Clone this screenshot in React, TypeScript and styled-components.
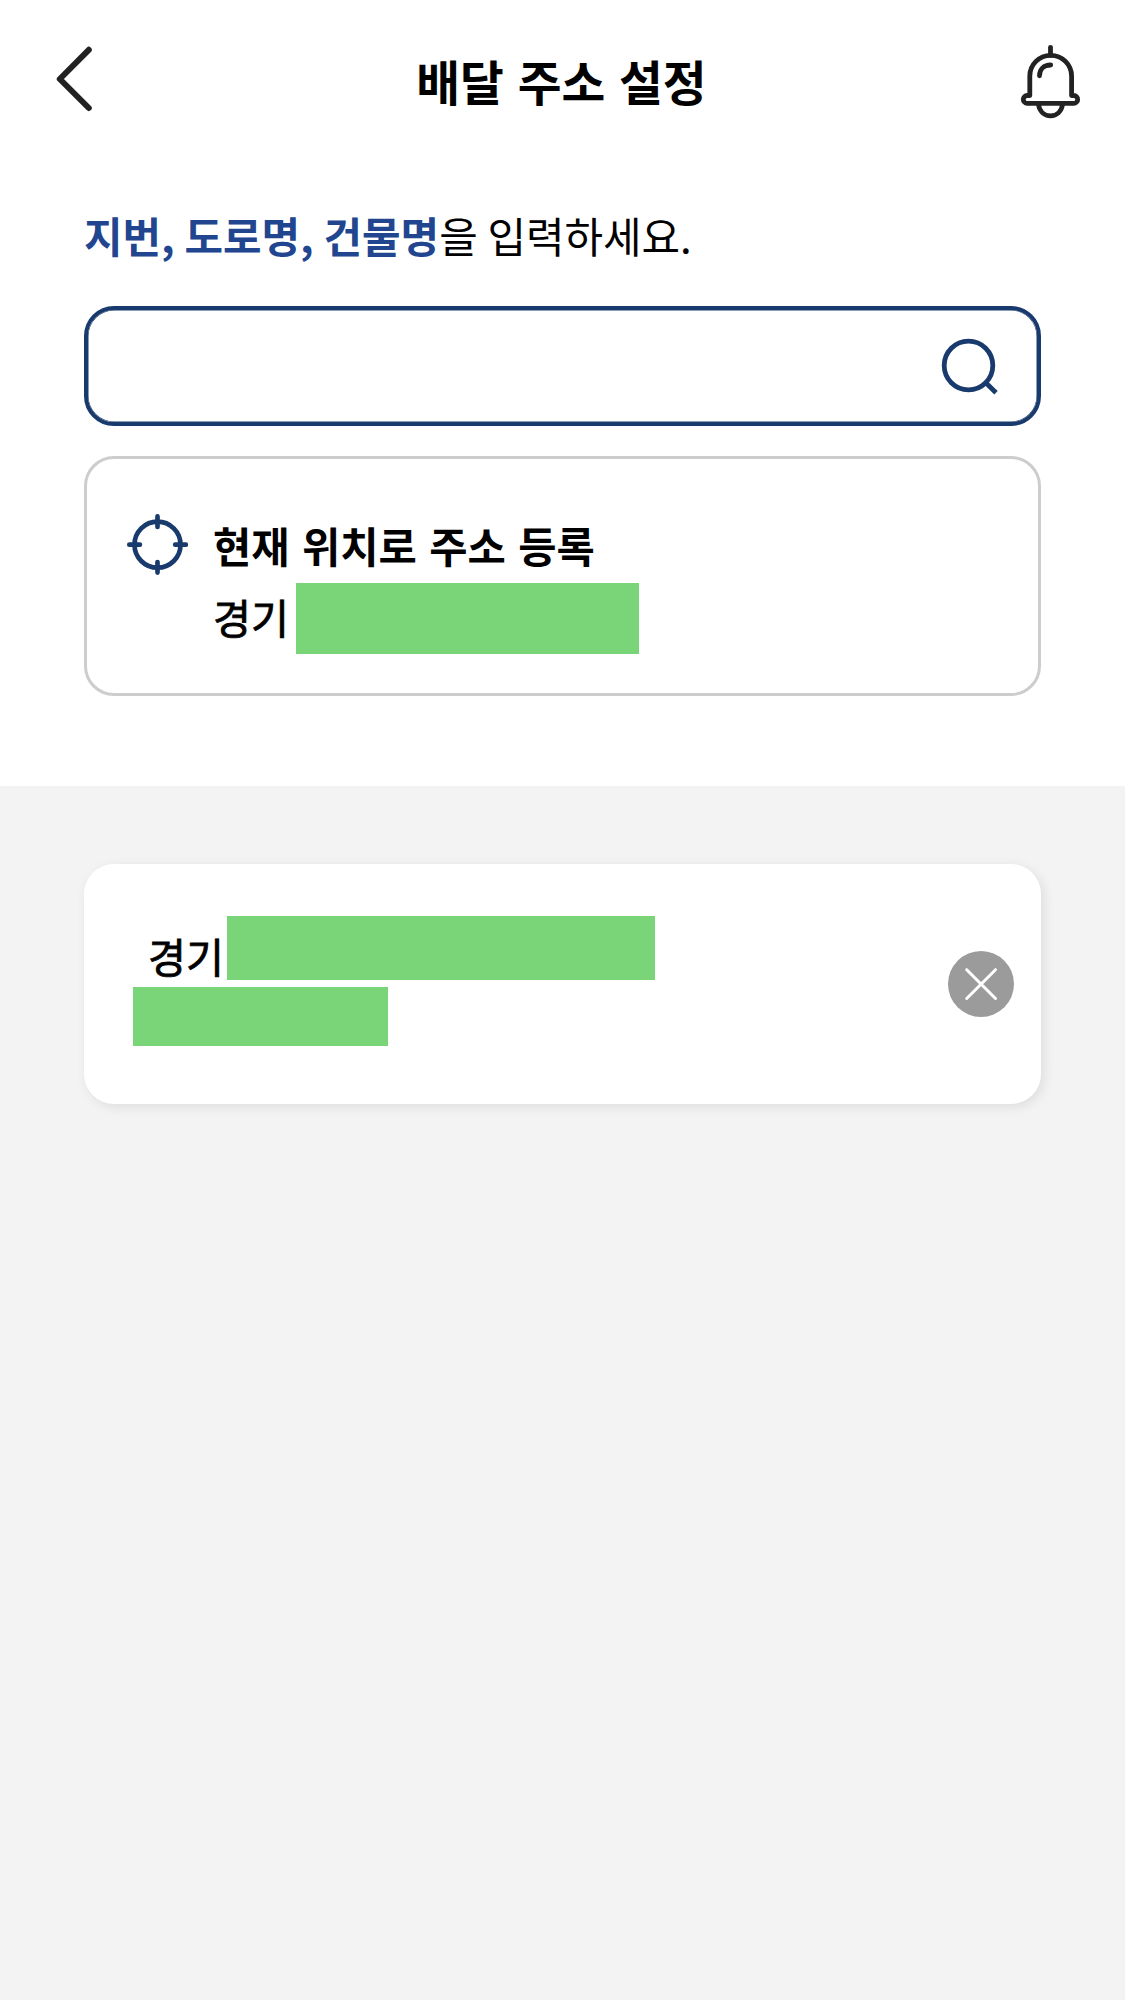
import React from "react";
import styled, { createGlobalStyle } from "styled-components";

const GlobalStyle = createGlobalStyle`
  * { box-sizing: border-box; }
  body {
    margin: 0;
    background: #f3f3f3;
    color: #000;
    font-family: "Noto Sans CJK KR", "Noto Sans", sans-serif;
  }
`;

const Screen = styled.div`
  width: 1125px;
  min-height: 2000px;
  display: flex;
  flex-direction: column;
  background: #f3f3f3;
`;

const TopPanel = styled.div`
  height: 786px;
  background: #fff;
`;

const Header = styled.header`
  display: grid;
  grid-template-columns: 120px 1fr 120px;
  align-items: start;
  height: 200px;
`;

const HeaderButton = styled.button`
  display: block;
  width: 120px;
  height: 100px;
  margin-top: 30px;
  padding: 0;
  border: 0;
  background: none;
`;

const Title = styled.h1`
  margin: 45px 2px 0 0;
  font-size: 47.6px;
  line-height: 72px;
  font-weight: 700;
  text-align: center;
  word-spacing: 3px;
  white-space: nowrap;
`;

const Form = styled.section`
  padding: 0 84px;
`;

const Guide = styled.p`
  height: 106px;
  margin: 0;
  padding-top: 4px;
  font-size: 41.9px;
  line-height: 62px;
  word-spacing: 0.3px;
  white-space: nowrap;
`;

const Keyword = styled.strong`
  color: #21468f;
  font-weight: 700;
`;

const SearchBox = styled.div`
  display: flex;
  align-items: center;
  height: 120px;
  padding-right: 37px;
  border: 4px solid #193a6d;
  border-radius: 30px;
  box-shadow: inset 0 0 0 0.5px #193a6d;
`;

const SearchInput = styled.input`
  flex: 1;
  min-width: 0;
  height: 100%;
  padding: 0 36px;
  border: 0;
  outline: 0;
  background: none;
  font: inherit;
  font-size: 42px;
`;

const LocationCard = styled.div`
  display: flex;
  align-items: flex-start;
  gap: 25px;
  height: 240px;
  margin-top: 30px;
  padding: 55px 39px 0;
  border: 3px solid #cdcdcd;
  border-radius: 30px;
`;

const LocationText = styled.div`
  display: flex;
  flex-direction: column;
  gap: 7px;
`;

const LocationTitle = styled.h2`
  margin: 0;
  font-size: 41.6px;
  line-height: 62px;
  font-weight: 700;
  word-spacing: 3px;
  white-space: nowrap;
`;

const AddressLine = styled.div<{ $gap: number }>`
  display: flex;
  align-items: flex-start;
  gap: ${(p) => p.$gap}px;
`;

const Region = styled.span<{ $top: number; $indent?: number }>`
  width: 77px;
  margin-left: ${(p) => p.$indent ?? 0}px;
  padding-top: ${(p) => p.$top}px;
  font-size: 41.3px;
  line-height: 50px;
  font-weight: 400;
  -webkit-text-stroke: 0.8px #000;
  white-space: nowrap;
`;

const Mask = styled.div<{ $width: number; $height: number }>`
  width: ${(p) => p.$width}px;
  height: ${(p) => p.$height}px;
  background: #7ad578;
`;

const SavedList = styled.section`
  padding: 78px 84px;
`;

const SavedCard = styled.div`
  display: flex;
  justify-content: space-between;
  height: 240px;
  padding: 52px 27px 0 49px;
  border-radius: 30px;
  background: #fff;
  box-shadow: 3px 3px 12px rgba(0, 0, 0, 0.09);
`;

const SavedAddress = styled.div`
  display: flex;
  flex-direction: column;
  gap: 7px;
`;

const DeleteButton = styled.button`
  width: 66px;
  height: 66px;
  margin-top: 35px;
  padding: 0;
  border: 0;
  border-radius: 50%;
  background: #9b9b9b;
`;

const Icon = styled.svg`
  display: block;
  flex: none;
  fill: none;
`;

export default function App() {
  return (
    <>
      <GlobalStyle />
      <Screen>
        <TopPanel>
          <Header>
            <HeaderButton aria-label="뒤로">
              <Icon width="120" height="100" viewBox="0 0 120 100" stroke="#222" strokeWidth="6" strokeLinecap="round" strokeLinejoin="round">
                <path d="M88.8 19.8 L59.8 49 L88.8 78" />
              </Icon>
            </HeaderButton>
            <Title>배달 주소 설정</Title>
            <HeaderButton aria-label="알림">
              <Icon width="120" height="100" viewBox="5 0 120 100" stroke="#222" strokeWidth="4.8" strokeLinecap="round" strokeLinejoin="round">
                <path d="M50.500 17.300v8" />
                <path d="M29.800 65.500V46.200a20.900 20.900 0 0 1 41.800 0v19.300h2.200a3.900 3.900 0 0 1 0 7.800H27.200a3.900 3.900 0 0 1 0-7.800z" />
                <path d="M39.500 45.800c0-6.600 4.400-10.800 11.200-10.800" />
                <path d="M38.500 74.500c1 7 5.800 11.300 12 11.300s11-4.300 12-11.300" />
              </Icon>
            </HeaderButton>
          </Header>
          <Form>
            <Guide>
              <Keyword>지번, 도로명, 건물명</Keyword>을 입력하세요.
            </Guide>
            <SearchBox>
              <SearchInput aria-label="주소 검색" />
              <Icon width="60" height="60" viewBox="0 0 60 60" stroke="#193a6d" strokeWidth="4.8">
                <circle cx="28.500" cy="29.500" r="24.300" />
                <path d="M45.800 46.800 L56 56.800" />
              </Icon>
            </SearchBox>
            <LocationCard>
              <Icon width="62" height="62" viewBox="0 0 62 62" stroke="#193a6d" strokeWidth="4.700" strokeLinecap="round">
                <circle cx="31.500" cy="30.700" r="23" />
                <path d="M31.500 2.400v10.600M31.500 48v10.600M3.300 30.700h10.600M49.200 30.700h10.600" />
              </Icon>
              <LocationText>
                <LocationTitle>현재 위치로 주소 등록</LocationTitle>
                <AddressLine $gap={6}>
                  <Region $top={8}>경기</Region>
                  <Mask $width={343} $height={71} />
                </AddressLine>
              </LocationText>
            </LocationCard>
          </Form>
        </TopPanel>
        <SavedList>
          <SavedCard>
            <SavedAddress>
              <AddressLine $gap={2}>
                <Region $top={14} $indent={15}>경기</Region>
                <Mask $width={428} $height={64} />
              </AddressLine>
              <Mask $width={255} $height={59} />
            </SavedAddress>
            <DeleteButton aria-label="삭제">
              <Icon width="66" height="66" viewBox="0 0 66 66" stroke="#fff" strokeWidth="3" strokeLinecap="round">
                <path d="M18.700 18.700 L47.500 47.500M47.500 18.700 L18.700 47.500" />
              </Icon>
            </DeleteButton>
          </SavedCard>
        </SavedList>
      </Screen>
    </>
  );
}
